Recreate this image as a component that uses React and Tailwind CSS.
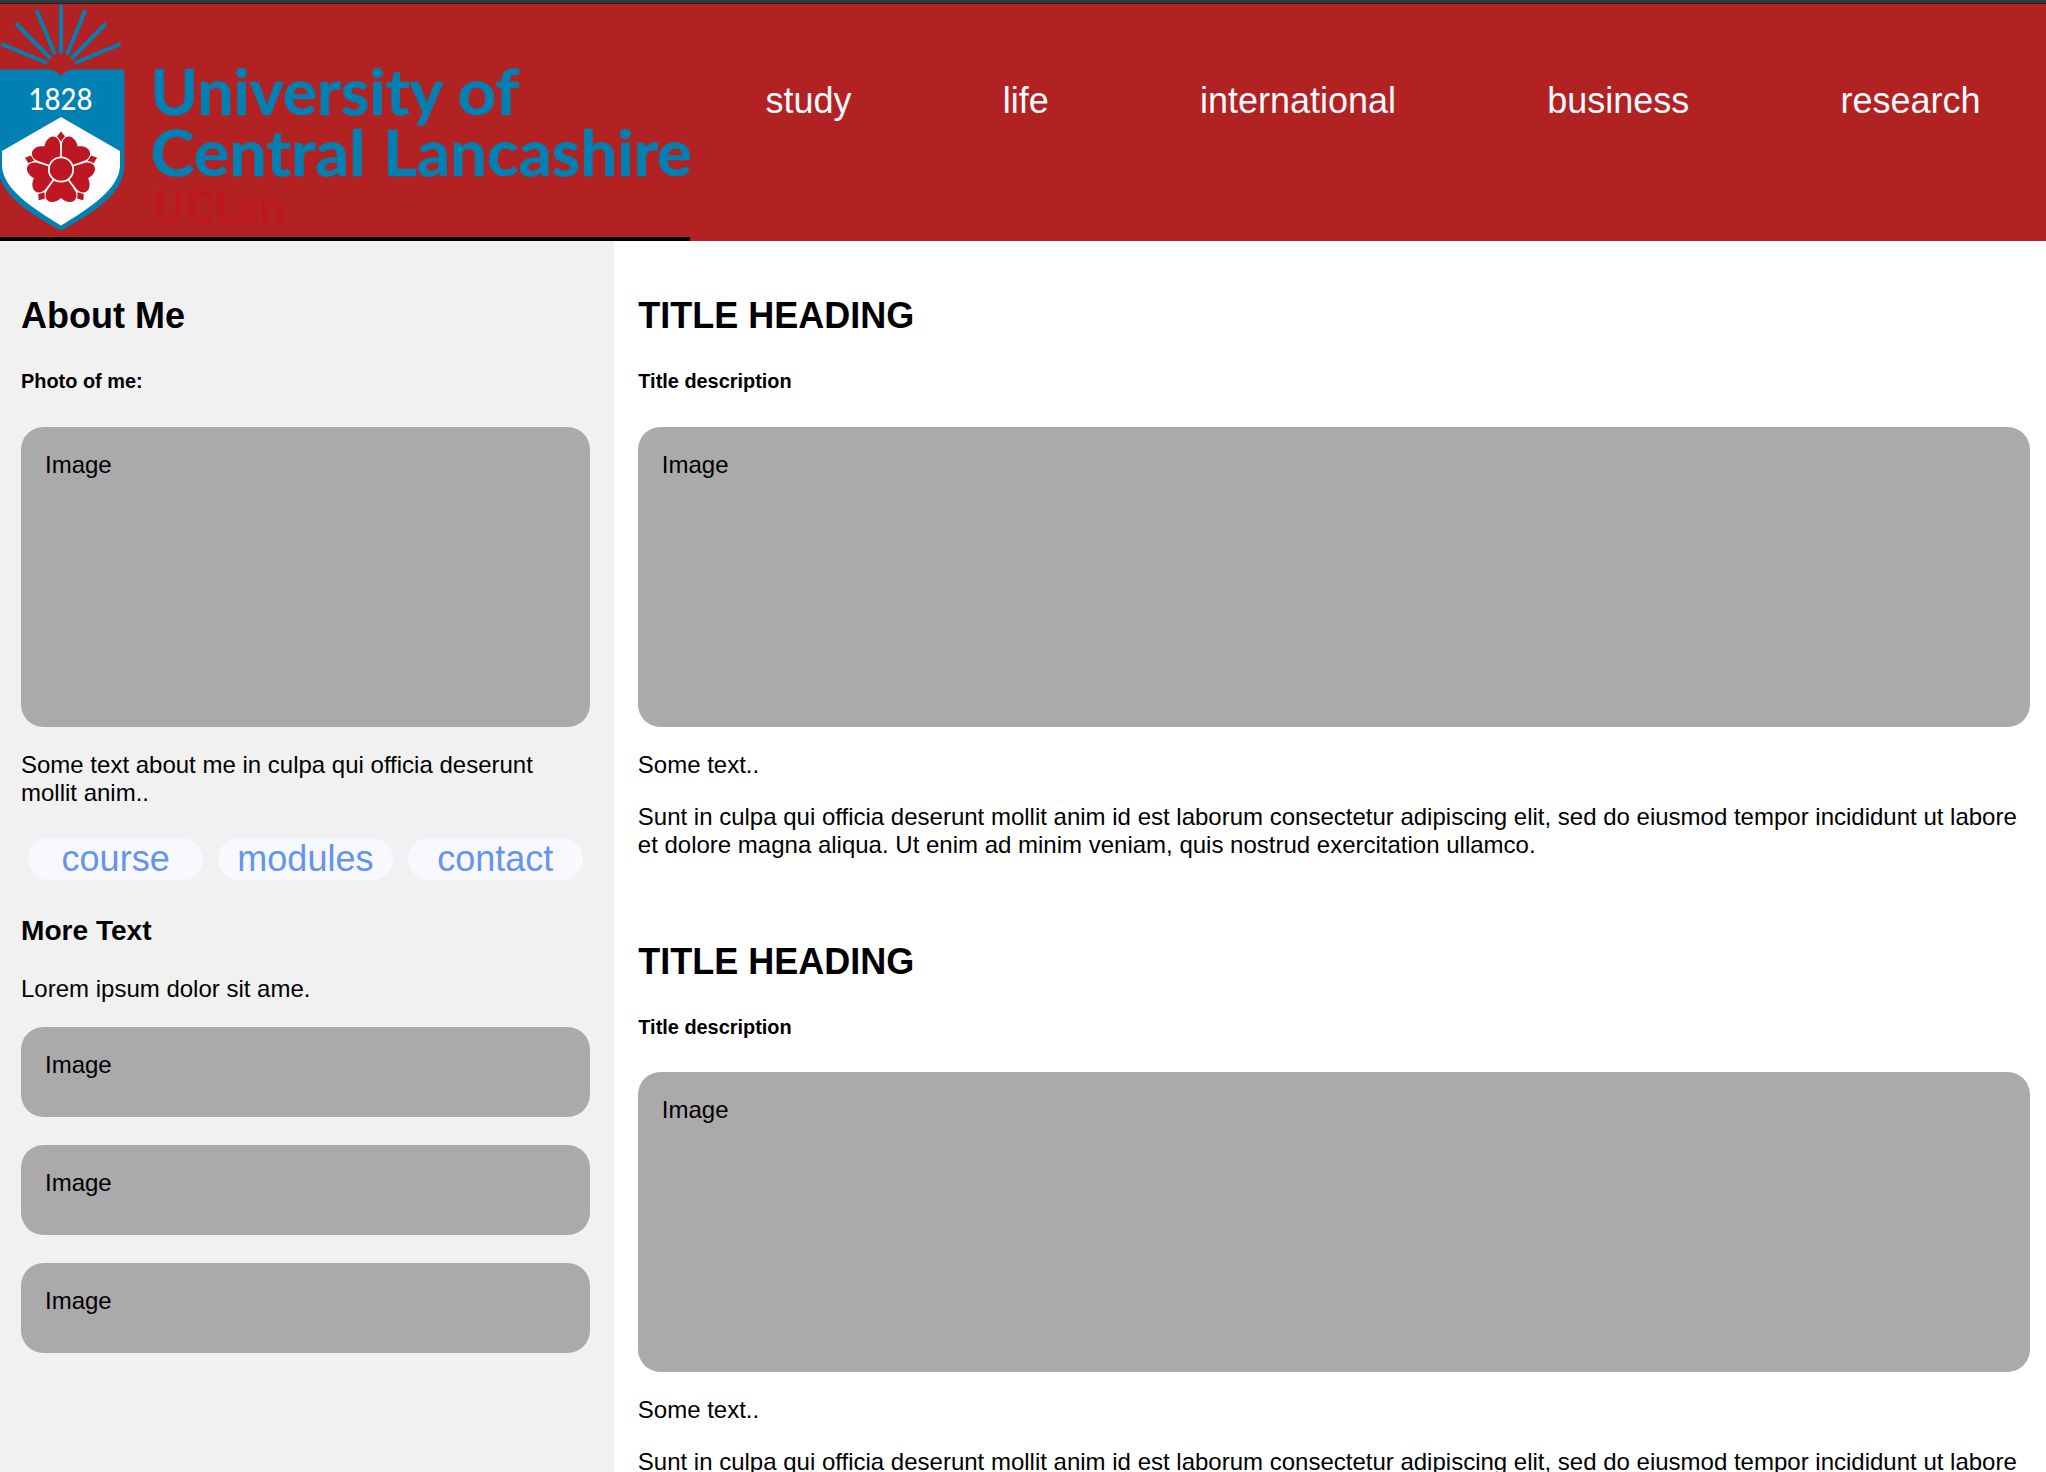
const NAV = ["study", "life", "international", "business", "research"];
const LINKS = ["course", "modules", "contact"];
const TURNS = [0, 72, 144, 216, 288];

function Logo() {
  return (
    <svg viewBox="0 4 690 233" width="690" height="233" className="block">
      <g stroke="#0080b3" strokeWidth="4" fill="none">
        <path d="M61 5V53.500M36.500 10L55 54.500M16 23.500L50.500 58.500M1.500 44L47 63M85.500 10L67 54.500M106 23.500L71.500 58.500M120.500 44L75 63" />
      </g>
      <path fill="#0080b3" d="M-2 69.500H51Q58 71.500 61 76Q64 71.500 71 69.500H124.300V166C124 193 94 213 61 230.500C28 213 -2 193 -2 166Z" />
      <path fill="#fff" d="M61 117L120 151V166C119 189 90 208 61 225.500C32 208 3 189 2 166V151Z" />
      <text x="28.500" y="110" fill="#fff" fontFamily="Lato" fontWeight="500" fontSize="31" textLength="64" lengthAdjust="spacingAndGlyphs">1828</text>
      <g transform="translate(61 169.500)" fill="#be1622">
        {TURNS.map((a) => (
          <g key={a} transform={`rotate(${a})`}>
            <path d="M-7 11L-13.500 20.200C-17.500 26 -15 32.500 -9 32.500C-5.500 32.500 -3 31 0 28.500C3 31 5.500 32.500 9 32.500C15 32.500 17.500 26 13.500 20.200L7 11Z" />
            <path d="M0 -38L4 -33.200L0 -28L-4 -33.200Z" />
          </g>
        ))}
        <circle r="12.200" stroke="#fff" strokeWidth="1.800" />
      </g>
      <g fill="#0080b3" stroke="#0080b3" strokeWidth="0.6" fontFamily="Lato" fontWeight="700" fontSize="63.5">
        <text x="150.500" y="115" textLength="293" lengthAdjust="spacingAndGlyphs">University</text>
        <text x="457.500" y="115" textLength="62" lengthAdjust="spacingAndGlyphs">of</text>
        <text x="150.500" y="175.700" textLength="215" lengthAdjust="spacingAndGlyphs">Central</text>
        <text x="383" y="175.700" textLength="309" lengthAdjust="spacingAndGlyphs">Lancashire</text>
      </g>
      <text x="152.500" y="223" fill="#be1622" fontFamily="Lato" fontWeight="900" fontSize="43" textLength="132" lengthAdjust="spacingAndGlyphs">UCLan</text>
    </svg>
  );
}

function ImageBox({ className }) {
  return <div className={`rounded-[22.5px] bg-[#aaaaaa] p-6 ${className}`}>Image</div>;
}

function Article() {
  return (
    <article className="mb-[81.7px]">
      <h2 className="pl-[0.5px] text-[36px] leading-[42px] font-bold">TITLE HEADING</h2>
      <h5 className="mt-[33px] mb-[33.5px] pl-[0.5px] text-[19.92px] leading-[23px] font-bold">Title description</h5>
      <ImageBox className="h-[300px]" />
      <p className="mt-6">Some text..</p>
      <p className="mt-6">
        Sunt in culpa qui officia deserunt mollit anim id est laborum consectetur adipiscing elit, sed do
        eiusmod tempor incididunt ut labore et dolore magna aliqua. Ut enim ad minim veniam, quis nostrud
        exercitation ullamco.
      </p>
    </article>
  );
}

export default function App() {
  return (
    <div className="flex h-[1472px] w-[2046px] flex-col overflow-hidden bg-white font-['Liberation_Sans',Arial,sans-serif] text-[24px] leading-[28px] text-black">
      <div className="h-1 shrink-0 border-b border-[#202124] bg-[#35363a]" />
      <header className="flex h-[237px] shrink-0 bg-[#b22222]">
        <div className="w-[690px] shrink-0 border-b-4 border-black">
          <Logo />
        </div>
        <nav className="flex gap-[151.2px] pt-[76px] pl-[75.5px] text-[36px] leading-[42px] text-[#f8f8ff]">
          {NAV.map((n) => (
            <a key={n}>{n}</a>
          ))}
        </nav>
      </header>
      <div className="flex min-h-0 flex-1">
        <aside className="w-[613.8px] shrink-0 bg-[#f1f1f1] pt-[54px] pr-6 pl-[21px]">
          <h2 className="text-[36px] leading-[42px] font-bold">About Me</h2>
          <h5 className="mt-[33px] mb-[34px] text-[19.92px] leading-[23px] font-bold">Photo of me:</h5>
          <ImageBox className="h-[300px]" />
          <p className="mt-6">Some text about me in culpa qui officia deserunt mollit anim..</p>
          <div className="mt-[31px] grid grid-cols-3 gap-[14.5px] px-[7px] text-center text-[36px] leading-[42px] text-[#6495ed]">
            {LINKS.map((l) => (
              <a key={l} className="rounded-[22.5px] bg-[#f8f8ff]">{l}</a>
            ))}
          </div>
          <h3 className="mt-[35px] text-[28.08px] leading-[32px] font-bold">More Text</h3>
          <p className="mt-7 mb-6">Lorem ipsum dolor sit ame.</p>
          <div className="flex flex-col gap-7">
            <ImageBox className="h-[90px]" />
            <ImageBox className="h-[90px]" />
            <ImageBox className="h-[90px]" />
          </div>
        </aside>
        <main className="min-w-0 flex-1 pt-[54.4px] pr-4 pl-6">
          <Article />
          <Article />
        </main>
      </div>
    </div>
  );
}
